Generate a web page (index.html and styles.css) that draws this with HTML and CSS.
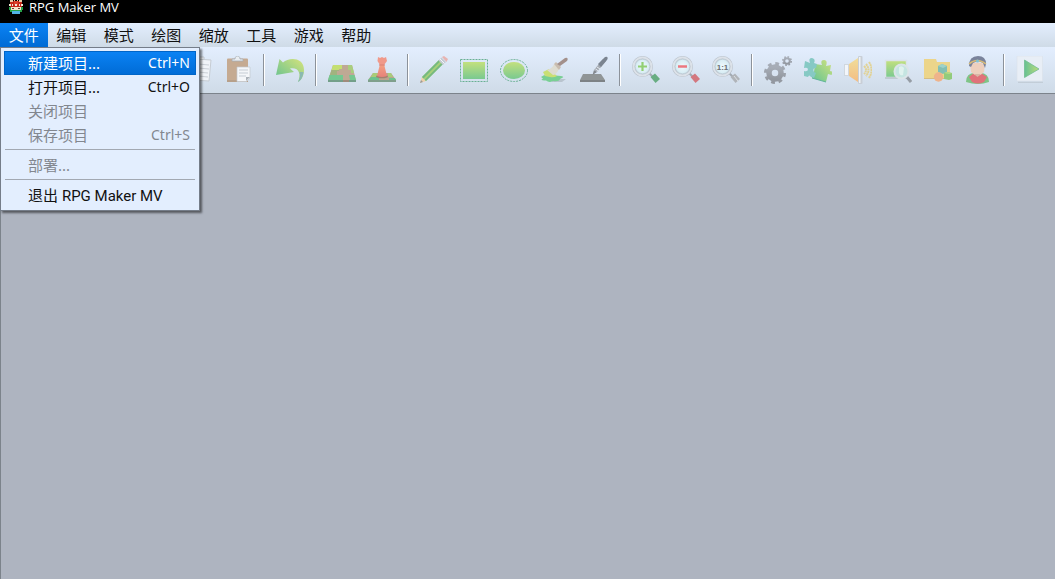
FILE: index.html
```html
<!DOCTYPE html>
<html lang="zh-CN">
<head>
<meta charset="utf-8">
<title>RPG Maker MV</title>
<link rel="stylesheet" href="styles.css">
</head>
<body>
<header class="titlebar">
<svg class="app-icon" viewBox="0 0 16 16" aria-hidden="true"><path d="M2 1h12v6H2z" fill="#c52818"/><path d="M2 0h3v2H2zM6 0h1v1H6zM9 0h1v1H9zM11 0h3v2h-3z" fill="#e7c9a8"/><path d="M6 1h4v4H6z" fill="#d9402b"/><path d="M1 4h2v2H1zM4 4h1v2H4zM7 4h2v2H7zM11 4h1v2h-1zM13 4h2v2h-2z" fill="#f4e3d4"/><path d="M2 7h12v3H2z" fill="#f6e2cb"/><path d="M4 8h2v1H4zM10 8h2v1h-2z" fill="#684535"/><path d="M1 7h2v3H1zM13 7h2v3h-2zM2 10h12v2H2z" fill="#26a349"/><path d="M4 11h8v3H4z" fill="#51b4e6"/></svg>
<h1 class="title">RPG Maker MV</h1>
</header>
<nav class="menubar" aria-label="主菜单">
<div class="menu-list">
<div class="menu-slot"><button class="menu-title is-open" aria-expanded="true">文件</button>
<div class="dropdown" role="menu">
<button class="item is-active" role="menuitem"><span>新建项目...</span><span class="latin">Ctrl+N</span></button>
<button class="item" role="menuitem"><span>打开项目...</span><span class="latin">Ctrl+O</span></button>
<button class="item" role="menuitem" disabled><span>关闭项目</span></button>
<button class="item" role="menuitem" disabled><span>保存项目</span><span class="latin">Ctrl+S</span></button>
<hr class="rule">
<button class="item" role="menuitem" disabled><span>部署...</span></button>
<hr class="rule">
<button class="item" role="menuitem"><span>退出 <span class="product">RPG Maker MV</span></span></button>
</div></div>
<button class="menu-title">编辑</button>
<button class="menu-title">模式</button>
<button class="menu-title">绘图</button>
<button class="menu-title">缩放</button>
<button class="menu-title">工具</button>
<button class="menu-title">游戏</button>
<button class="menu-title">帮助</button>
</div>
</nav>
<div class="toolbar" role="toolbar" aria-label="工具栏">
<svg class="defs" aria-hidden="true"><defs>
<linearGradient id="green" x1="0" y1="0" x2="0" y2="1"><stop offset="0" stop-color="#c3e07e"/><stop offset="1" stop-color="#79c990"/></linearGradient>
<linearGradient id="leaf" x1="1" y1="0" x2="0" y2="1"><stop offset="0" stop-color="#d6e37c"/><stop offset="1" stop-color="#5fbf92"/></linearGradient>
<linearGradient id="puz" x1="0" y1="1" x2="1" y2="0"><stop offset="0" stop-color="#62c394"/><stop offset="1" stop-color="#d2e27d"/></linearGradient>
<linearGradient id="play" x1="0" y1="0" x2="1" y2="0"><stop offset="0" stop-color="#66c193"/><stop offset="1" stop-color="#bddc7a"/></linearGradient>
<linearGradient id="red" x1="0" y1="0" x2="0" y2="1"><stop offset="0" stop-color="#f5a284"/><stop offset="1" stop-color="#e58279"/></linearGradient>
<linearGradient id="amber" x1="0" y1="0" x2="0" y2="1"><stop offset="0" stop-color="#f1dd9a"/><stop offset="1" stop-color="#f3bd83"/></linearGradient>
<linearGradient id="grey" x1="0" y1="0" x2="0" y2="1"><stop offset="0" stop-color="#a7adb7"/><stop offset="1" stop-color="#92979f"/></linearGradient>
<radialGradient id="glass"><stop offset="0" stop-color="#eff9fc"/><stop offset="1" stop-color="#cfe8f1"/></radialGradient>
<g id="lens"><path d="M17 17l4 4" stroke="#a2a9b1" stroke-width="2"/><circle cx="10.500" cy="10.500" r="9" fill="url(#glass)" stroke="#bac2cb" stroke-width="3"/><circle cx="10.500" cy="10.500" r="9" fill="none" stroke="#dce2e9" stroke-width="2"/><circle cx="10.500" cy="10.500" r="7.200" fill="none" stroke="#b9c5cf" stroke-width=".6"/></g>
</defs></svg>
<button class="tool" aria-label="新建项目"><svg viewBox="0 0 28 28"><path d="M5 2h13l5 5v19H5z" fill="#f4f7fa" stroke="#b7bec7"/></svg></button>
<button class="tool" aria-label="打开项目"><svg viewBox="0 0 28 28"><path d="M1 5h9l3 3h14v16H1z" fill="url(#amber)"/></svg></button>
<button class="tool" aria-label="保存项目"><svg viewBox="0 0 28 28"><path d="M3 3h22v22H3z" fill="#8fb4d6"/><path d="M7 3h14v9H7z" fill="#eef4f9"/></svg></button>
<span class="divider"></span>
<button class="tool" aria-label="剪切"><svg viewBox="0 0 28 28"><path d="M8 3l12 18M20 3L8 21" stroke="#a1a7ae" stroke-width="2"/><circle cx="7" cy="23" r="3" fill="none" stroke="#e0867c" stroke-width="2"/><circle cx="21" cy="23" r="3" fill="none" stroke="#e0867c" stroke-width="2"/></svg></button>
<button class="tool" aria-label="复制"><svg viewBox="0 0 28 28"><path d="M5 1h15v20H5z" fill="#f1f4f8" stroke="#c2c8d0"/><path d="M12 3l15 1-2 21-15-1z" fill="#f1f4f8" stroke="#c6ccd3"/><path d="M14 8l11 1M14 12l11 1M14 16l10 1M14 20l10 1" stroke="#ccd1d7" stroke-width="1.200"/></svg></button>
<button class="tool" aria-label="粘贴"><svg viewBox="0 0 28 28"><rect x="3" y="2.500" width="21" height="23.500" rx="1" fill="#c5aa91"/><path d="M3 24h21v2H3z" fill="#b7a08a"/><path d="M8 5V3h3c0-4 5-4 5 0h3v2z" fill="#e9edf1" stroke="#a6adb5" stroke-width=".8"/><path d="M13 11h13v11l-3.500 3.500H13z" fill="#f4f6f9" stroke="#c3c8cf" stroke-width=".7"/><path d="M15 14h9M15 17h9M15 20h7" stroke="#c5ccd4"/><path d="M26 21h-4v4z" fill="#aab1b9"/></svg></button>
<span class="divider"></span>
<button class="tool" aria-label="撤销"><svg viewBox="0 0 28 28"><path d="M0 19L3.500 3 7 6.500C13 1 28 1 28 14c0 6-3 10.500-6 12 3.500-8 1-15-8-13.500l4 3.500z" fill="url(#leaf)"/><path d="M27.500 16c-.5 5-3 9-5.500 10 2-4 2.500-7 1.500-10" fill="#8bb9b1"/></svg></button>
<span class="divider"></span>
<button class="tool" aria-label="地图"><svg viewBox="0 0 28 28"><path d="M5 9h19l4 15v2H0v-2z" fill="#bfa994"/><path d="M5 9h9v4h-3v1H3.500z" fill="#c4df72"/><path d="M20 9h4l2 8h-3v-3h-3z" fill="#a9ce7e"/><path d="M3.500 14H11v1H9v4H2z" fill="#a1b37f"/><path d="M1.500 19H15v5H0zM21 19h5.500l1.500 5h-6z" fill="#75c791"/><path d="M0 24h28v2H0z" fill="#739f89"/><path d="M15 24h6v2h-6z" fill="#a08b7b"/></svg></button>
<button class="tool" aria-label="事件"><svg viewBox="0 0 28 28"><path d="M5 17h18l5 7v2H0v-2z" fill="#b9a48e"/><path d="M5 17h8v2H9v2H3zM20 17h3l2 4h-5z" fill="#a9cc79"/><path d="M3 21h8v3H0zM21 22h6l1 2h-7z" fill="#6cc28e"/><path d="M0 24h28v2H0z" fill="#7f9f8c"/><ellipse cx="14" cy="20.500" rx="6" ry="1.800" fill="#a2806f"/><path d="M12 8h4l3 12q-5 2-10 0z" fill="url(#red)"/><path d="M10 1l2 1 2-1 2 1 2-1 1 4-3 4h-4L9.500 5z" fill="#f0998a"/><path d="M11 9h6" stroke="#d98077"/></svg></button>
<span class="divider"></span>
<button class="tool" aria-label="铅笔"><svg viewBox="0 0 28 28"><path d="M0 27l2-6 4 4z" fill="#edcfaa"/><path d="M0 27l1-3 2 2z" fill="#999"/><path d="M2 21L19 4l4 4L6 25z" fill="#a7d078"/><path d="M2 21L19 4l1.300 1.300L3.500 22.500zM4.700 23.700L21.700 6.700 23 8 6 25z" fill="#75b981"/><path d="M18.500 4.500l3-3 4.500 4.500-3 3z" fill="#c5cbd4"/><path d="M20 3l4.500 4.500" stroke="#f3f5f8"/><path d="M22 1l2-1 4 3-1.500 3z" fill="#e7b4b2"/></svg></button>
<button class="tool" aria-label="矩形"><svg viewBox="0 0 28 28"><rect x=".5" y="3.500" width="27" height="22" fill="none" stroke="#69b093" stroke-dasharray="2 1"/><path d="M3 6h22v17H3z" fill="url(#green)"/></svg></button>
<button class="tool" aria-label="椭圆"><svg viewBox="0 0 28 28"><ellipse cx="14" cy="14.500" rx="13.500" ry="11" fill="none" stroke="#69b093" stroke-dasharray="2 1"/><ellipse cx="14" cy="14.500" rx="11" ry="8.500" fill="url(#green)"/></svg></button>
<button class="tool" aria-label="填充"><svg viewBox="0 0 28 28"><path d="M12 23h14l-4 3H12z" fill="#b9c4ce"/><path d="M1 21q4-3 8-2l12 1q5 1-1 3-1 3-7 2-4 2-7-.5-7 0-3-2z" fill="#79cf94"/><path d="M3 16l6-3 8 7q-3 2-7 1l-5-1z" fill="#c9df74"/><path d="M7 14q6-2 7-6l5 5q-3 6-6 6z" fill="#dedcd0"/><path d="M14 8l2-2 5 5-2 3z" fill="#c9bcae"/><path d="M17 8l8-6q4-1 2 3l-7 5z" fill="#a3908b"/></svg></button>
<button class="tool" aria-label="阴影笔"><svg viewBox="0 0 28 28"><path d="M3 18h18l4 6v2H0v-2z" fill="#909596"/><path d="M0 24h25v2H0z" fill="#7d8285"/><path d="M12.500 19l1.500-5 3 2z" fill="#82878d"/><path d="M14 14l9-11 3 2-9 11z" fill="#a3a9b1"/><path d="M18 8l7-7q4-1 2 3l-6 7z" fill="#7b8490"/><path d="M17 11l3 2M15.500 13l3 2" stroke="#e4eaf1"/></svg></button>
<span class="divider"></span>
<button class="tool" aria-label="放大"><svg viewBox="0 0 28 28"><use href="#lens"/><path d="M10.500 6v9M6 10.500h9" stroke="#91cf73" stroke-width="2.200"/><path d="M18.500 21l4.500-3.500 5 5.500-4.500 4z" fill="#68ad82"/></svg></button>
<button class="tool" aria-label="缩小"><svg viewBox="0 0 28 28"><use href="#lens"/><path d="M6 10.500h9" stroke="#eb7880" stroke-width="2.500"/><path d="M18.500 21l4.500-3.500 5 5.500-4.500 4z" fill="#d3777f"/></svg></button>
<button class="tool" aria-label="实际大小"><svg viewBox="0 0 28 28"><use href="#lens"/><text class="ratio" x="10.500" y="13.500" text-anchor="middle">1:1</text><path d="M18.500 21l4.500-3.500 5 5.500-4.500 4z" fill="#b0b4b9"/><path d="M22 20l4 5" stroke="#dce0e4"/></svg></button>
<span class="divider"></span>
<button class="tool" aria-label="数据库"><svg viewBox="0 0 28 28"><g fill="none" stroke="url(#grey)"><circle cx="11" cy="17" r="6" stroke-width="5.500"/><circle cx="11" cy="17" r="9.500" stroke-width="3" stroke-dasharray="3.730 3.730"/><circle cx="23" cy="5" r="2.800" stroke-width="2"/><circle cx="23" cy="5" r="4.200" stroke-width="1.600" stroke-dasharray="1.650 1.650"/></g></svg></button>
<button class="tool" aria-label="插件管理器"><svg viewBox="0 0 28 28"><path d="M11 8l7 1q-2-5 2-5t2 6l5-1-1 6q4 0 1.500 4L24 18l-2 8-14-4 2-6z" fill="url(#puz)"/><path d="M1 5l5 2q-2-5 2-5 4 1 2 5l3 1-1 4q-4 0-2 4l2 1-2 5-3-1q-2-3-3 0l-4-1V15q4 1 4-2-1-2-4-1z" fill="#86c9c4"/><path d="M8 22l14 4" stroke="#61b59a"/></svg></button>
<button class="tool" aria-label="声音测试"><svg viewBox="0 0 28 28"><path d="M0 8h6v12H0z" fill="#d0d7de"/><path d="M1 9h3v10H1z" fill="#f3f6fa"/><path d="M5 8l9-6v24l-9-6z" fill="url(#amber)"/><rect x="14" y="0" width="4.500" height="28" rx="1" fill="#c9cfd7"/><path d="M15 1h1.500v26H15z" fill="#f0f3f6"/><path d="M20 10q4 4 0 8M22 8q5 6 0 12M25 6q5 8 0 16" fill="none" stroke="#e2d294" stroke-width="2" stroke-dasharray="2 .5"/></svg></button>
<button class="tool" aria-label="事件搜索"><svg viewBox="0 0 28 28"><path d="M1.500 4.500h21v17h-21z" fill="url(#green)" stroke="#dce3e9" stroke-width="1.500"/><path d="M1 22h22" stroke="#a7b5b8"/><path d="M22 20l5 6" stroke="#969da5" stroke-width="3"/><circle cx="17.500" cy="15.500" r="7" fill="#c5e5e1" stroke="#dce4e8" stroke-width="2"/><path d="M15 11q3-2 5 1l-1 7q-3 1-4-2" fill="#e0f2ee"/></svg></button>
<button class="tool" aria-label="资源管理器"><svg viewBox="0 0 28 28"><path d="M0 3h12l1 3h13v17H0z" fill="#ecd58a"/><path d="M0 22h26v1H0z" fill="#d4bd83"/><path d="M14 10l4-2 5 2v6l-4 2-5-2z" fill="#83bfb4"/><path d="M14 10l4-2 5 2-4 2z" fill="#9fd2c9"/><circle cx="14.500" cy="21" r="4.700" fill="#eeb38b"/><path d="M20 17l3-1 5 1v6l-3 1-5-1z" fill="#92cb7c"/><path d="M20 17l3-1 5 1-3 1z" fill="#b8db83"/></svg></button>
<button class="tool" aria-label="角色生成器"><svg viewBox="0 0 28 28"><path d="M2 26q0-9 9-9h5q9 0 9 9-11 4-23 0z" fill="#7fc486"/><path d="M5 21l5-4h7l6 4-3 5q-6 3-12 0z" fill="#e0727a"/><path d="M6 8q7-3 15 0l-1 8q-6 7-13 0z" fill="#edcfbd"/><path d="M10 18h7l-3.500 3z" fill="#d9b6a6"/><path d="M5 10q0-10 9-10 8 0 8 8l-1 4-2-5-5-2-5 2-2 4z" fill="#7a839b"/><path d="M5 8q8-7 17 0" fill="none" stroke="#d8bb77" stroke-width="1.500"/><circle cx="13.500" cy="5" r="1.500" fill="#7ec3d5"/></svg></button>
<span class="divider"></span>
<button class="tool" aria-label="试玩"><svg viewBox="0 0 28 28"><rect x="1" y="0" width="25.500" height="25" fill="#e8eef6" stroke="#dae2ea" stroke-width=".6"/><path d="M2 26.300h25" stroke="#bec8d2"/><path d="M8.500 4L23 13 8.500 21.500z" fill="url(#play)" stroke="#71bc90" stroke-width=".8"/></svg></button>
</div>
<main class="workspace"></main>
</body>
</html>
```
FILE: styles.css
```css
* { box-sizing: border-box; }
body {
  margin: 0;
  min-height: 100vh;
  display: flex;
  flex-direction: column;
  background: #aeb4c0;
  font: 15px/24px "Noto Sans", "Noto Sans CJK SC", sans-serif;
  color: #111;
}
button {
  font: inherit;
  color: inherit;
  border: 0;
  padding: 0;
  background: none;
}
.titlebar {
  display: flex;
  gap: 5px;
  height: 23px;
  padding-left: 8px;
  background: #000;
}
.app-icon { width: 16px; height: 16px; }
.title {
  margin: 0;
  color: #fff;
  font: 13px/14px "Open Sans", sans-serif;
}
.menubar, .toolbar { background: linear-gradient(#e3eefe, #cfdbe7); }
.menu-list {
  display: grid;
  grid-template-columns: repeat(8, 1fr);
  max-width: 380px;
}
.menu-slot { position: relative; }
.menu-title {
  width: 100%;
  height: 24px;
  text-align: center;
}
.is-open, .is-active {
  color: #fff;
  background: linear-gradient(#0b83f5, #006bd5);
}
.dropdown {
  position: absolute;
  z-index: 2;
  top: 24px;
  left: 0;
  width: 200px;
  padding: 3px;
  border: 1px solid #757d89;
  background: #e3eefe;
  box-shadow: 2px 2px 2px rgba(0, 0, 0, .5);
}
.item {
  display: flex;
  justify-content: space-between;
  width: 100%;
  height: 24px;
  padding: 0 6px 0 24px;
  white-space: nowrap;
}
.item:disabled { color: #82878f; }
.item.is-active { box-shadow: inset 0 0 0 1px #0065c8; }
.latin { font-size: 14px; }
.product { font: 15px/24px Roboto, sans-serif; }
.rule {
  height: 1px;
  margin: 2px 1px 3px;
  border: 0;
  background: #a2a8b2;
}
.toolbar {
  display: flex;
  align-items: center;
  height: 47px;
  padding-left: 6px;
  border-bottom: 1px solid #7c838b;
  overflow: hidden;
}
.defs { position: absolute; width: 0; height: 0; }
.tool {
  display: grid;
  place-items: center;
  flex: 0 0 40px;
  height: 40px;
}
.tool svg { width: 28px; height: 28px; }
.ratio { font: bold 8px "Liberation Sans", sans-serif; fill: #686e74; }
.divider {
  flex: 0 0 2px;
  height: 32px;
  margin: 0 5px;
  border-left: 1px solid #8c929a;
  border-right: 1px solid #fff;
}
.workspace { flex: 1; border-left: 1px solid #7c838b; }
```
